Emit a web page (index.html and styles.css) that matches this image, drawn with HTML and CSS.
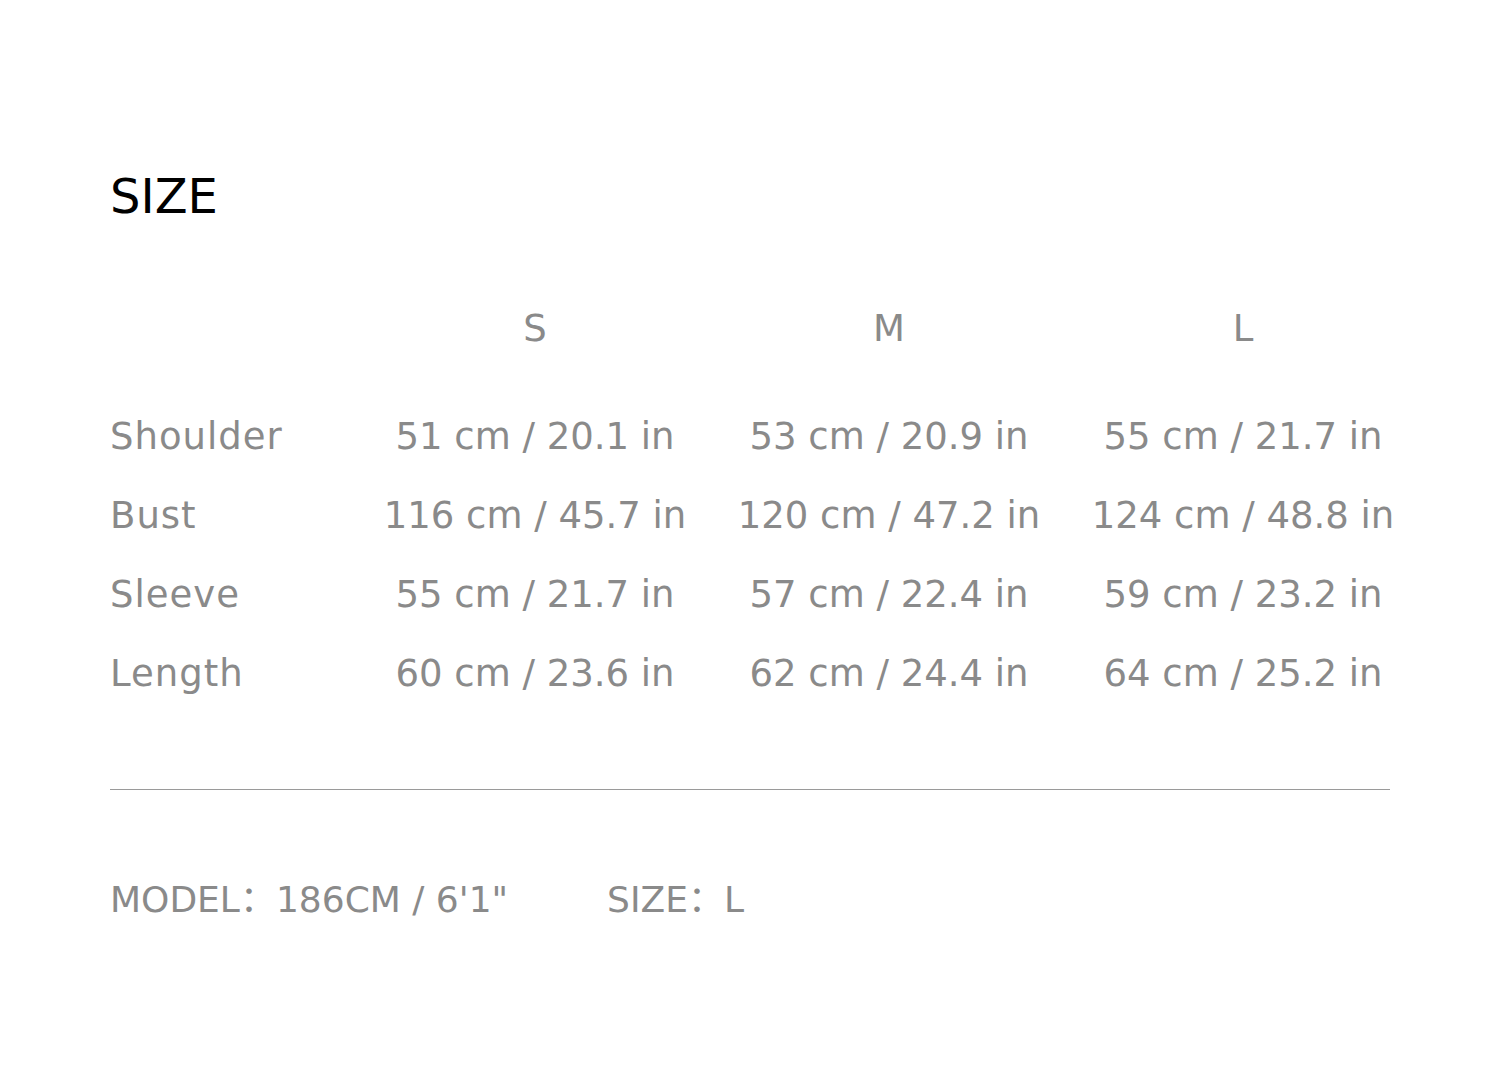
FILE: index.html
```html
<!DOCTYPE html>
<html>
<head>
<meta charset="utf-8">
<link rel="stylesheet" href="styles.css">
</head>
<body>
<div class="page">
  <h1 class="title">SIZE</h1>
  <div class="table">
    <div class="row head">
      <div class="label"></div>
      <div class="cell">S</div>
      <div class="cell">M</div>
      <div class="cell">L</div>
    </div>
    <div class="row">
      <div class="label">Shoulder</div>
      <div class="cell">51 cm / 20.1 in</div>
      <div class="cell">53 cm / 20.9 in</div>
      <div class="cell">55 cm / 21.7 in</div>
    </div>
    <div class="row">
      <div class="label">Bust</div>
      <div class="cell">116 cm / 45.7 in</div>
      <div class="cell">120 cm / 47.2 in</div>
      <div class="cell">124 cm / 48.8 in</div>
    </div>
    <div class="row">
      <div class="label">Sleeve</div>
      <div class="cell">55 cm / 21.7 in</div>
      <div class="cell">57 cm / 22.4 in</div>
      <div class="cell">59 cm / 23.2 in</div>
    </div>
    <div class="row">
      <div class="label">Length</div>
      <div class="cell">60 cm / 23.6 in</div>
      <div class="cell">62 cm / 24.4 in</div>
      <div class="cell">64 cm / 25.2 in</div>
    </div>
  </div>
  <hr class="rule">
  <div class="footer">
    <span class="model">MODEL：186CM / 6'1"</span>
    <span class="size">SIZE：L</span>
  </div>
</div>
</body>
</html>
```
FILE: styles.css
```css
html, body {
  margin: 0;
  padding: 0;
  background: #ffffff;
}
.page {
  padding: 166px 0 0 110px;
  font-family: "DejaVu Sans", "Noto Sans CJK SC", sans-serif;
  color: #8a8a8a;
}
.title {
  margin: 0;
  font-size: 48px;
  font-weight: normal;
  color: #000000;
  line-height: 60px;
}
.table {
  margin-top: 63px;
}
.row {
  display: grid;
  grid-template-columns: 248px 354px 354px 354px;
  height: 79px;
  align-items: center;
  font-size: 37px;
}
.label {
  white-space: nowrap;
  letter-spacing: 1px;
}
.row.head {
  margin-bottom: 29px;
}
.cell {
  text-align: center;
  white-space: nowrap;
}
.rule {
  margin: 76px 0 0 0;
  width: 1280px;
  border: 0;
  border-top: 1px solid #9a9a9a;
  height: 0;
}
.footer {
  margin-top: 90px;
  font-size: 36px;
  display: flex;
  gap: 99px;
  line-height: 40px;
}
```
